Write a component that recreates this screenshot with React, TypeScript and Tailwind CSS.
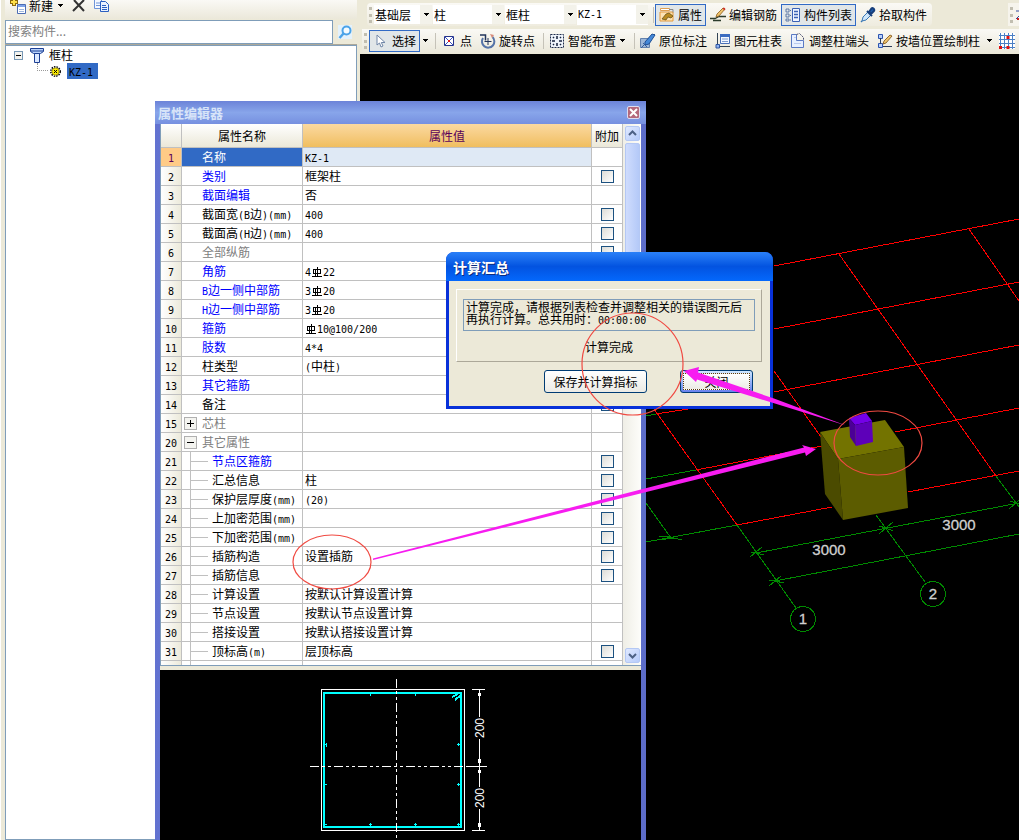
import React, { useState } from 'react';

const MONO = "font-['DejaVu_Sans_Mono','Noto_Sans_CJK_SC',monospace] text-[10px] leading-none";

const Rebar: React.FC = () => (
  <svg viewBox="0 0 10 10" className="inline-block w-[10px] h-[10px] mx-px align-[-1px]" fill="none" stroke="currentColor" shapeRendering="crispEdges">
    <path d="M1.500 2.500h7v4h-7zM3.500 2.500v7M5.500 0v10M0 9.500h10" />
  </svg>
);

// latin runs are half as wide as a hanzi, '#' stands for the rebar grade sign
const Mixed: React.FC<{ text: string }> = ({ text }) => (
  <>
    {text.split(/(#|[\x20-\x22\x24-\x7e]+)/).map((part, i) => {
      if (part === '#') return <Rebar key={i} />;
      if (/^[\x20-\x7e]+$/.test(part)) return <span key={i} className={MONO}>{part}</span>;
      return part;
    })}
  </>
);

interface PropertyRow {
  no: number;
  name: string;
  value?: string;
  color?: 'blue' | 'gray';
  check?: boolean;
  group?: '+' | '-';
  child?: boolean;
}

const rows: PropertyRow[] = [
  { no: 1, name: '名称', value: 'KZ-1' },
  { no: 2, name: '类别', value: '框架柱', color: 'blue', check: true },
  { no: 3, name: '截面编辑', value: '否', color: 'blue' },
  { no: 4, name: '截面宽(B边)(mm)', value: '400', check: true },
  { no: 5, name: '截面高(H边)(mm)', value: '400', check: true },
  { no: 6, name: '全部纵筋', color: 'gray', check: true },
  { no: 7, name: '角筋', value: '4#22', color: 'blue', check: true },
  { no: 8, name: 'B边一侧中部筋', value: '3#20', color: 'blue', check: true },
  { no: 9, name: 'H边一侧中部筋', value: '3#20', color: 'blue', check: true },
  { no: 10, name: '箍筋', value: '#10@100/200', color: 'blue', check: true },
  { no: 11, name: '肢数', value: '4*4', color: 'blue' },
  { no: 12, name: '柱类型', value: '(中柱)', check: true },
  { no: 13, name: '其它箍筋', color: 'blue' },
  { no: 14, name: '备注', check: true },
  { no: 15, name: '芯柱', color: 'gray', group: '+' },
  { no: 20, name: '其它属性', color: 'gray', group: '-' },
  { no: 21, name: '节点区箍筋', color: 'blue', check: true, child: true },
  { no: 22, name: '汇总信息', value: '柱', check: true, child: true },
  { no: 23, name: '保护层厚度(mm)', value: '(20)', check: true, child: true },
  { no: 24, name: '上加密范围(mm)', check: true, child: true },
  { no: 25, name: '下加密范围(mm)', check: true, child: true },
  { no: 26, name: '插筋构造', value: '设置插筋', check: true, child: true },
  { no: 27, name: '插筋信息', check: true, child: true },
  { no: 28, name: '计算设置', value: '按默认计算设置计算', child: true },
  { no: 29, name: '节点设置', value: '按默认节点设置计算', child: true },
  { no: 30, name: '搭接设置', value: '按默认搭接设置计算', child: true },
  { no: 31, name: '顶标高(m)', value: '层顶标高', check: true, child: true },
];

/* ---------- icons ---------- */

const Icon: React.FC<{ children: React.ReactNode }> = ({ children }) => (
  <svg viewBox="0 0 16 16" className="w-4 h-4 shrink-0" fill="none" aria-hidden="true">
    {children}
  </svg>
);

const PropertyIcon = () => (
  <Icon>
    <path d="M1.500 1.500h9v2h-9z" fill="#fff" stroke="#e0a050" />
    <path d="M1 5h13v9H1z" fill="#fde3b4" stroke="#e59a3c" />
    <path d="M3 12l4-5 3-1 4 3-2 2-3-1-2 3z" fill="#b98a20" stroke="#5f4a10" strokeWidth=".7" />
    <path d="M10 2.500h4v3" stroke="#888" />
  </Icon>
);

const EditBarIcon = () => (
  <Icon>
    <path d="M0 11.500h5l4-2h7M3 13.500h8" stroke="#2b3b2b" strokeWidth="1.300" />
    <path d="M6 10l1-3 6-6 2 1-6 7z" fill="#efc36b" stroke="#8a5a1c" strokeWidth=".8" />
    <path d="M12.500 1.500l1.500-1 1.500 1.500-1 1.500z" fill="#d03028" />
  </Icon>
);

const ListIcon = () => (
  <Icon>
    <path d="M1 2h3v3H1zM1 7h3v3H1zM1 12h3v2H1z" stroke="#5470a0" strokeWidth=".9" />
    <path d="M5 3.500h1M5 8.500h1M5 13h1" stroke="#5470a0" />
    <path d="M7.500 1.500h7v13h-7z" fill="#eef4ff" stroke="#3b62b4" />
    <path d="M9 4.500h4M9 7.500h4M9 10.500h4" stroke="#3b62b4" strokeWidth="1.500" />
  </Icon>
);

const DropperIcon = () => (
  <Icon>
    <path d="M2 14l1-4 5-5 3 3-5 5z" fill="#cfe6fa" stroke="#3977b5" />
    <path d="M7 4l5 5M9 5l2.500-3.500c1-1 3.500.500 2.500 2.500L11 7z" fill="#1f5fae" stroke="#173f7c" strokeWidth="2" />
    <path d="M1 15l1-1" stroke="#3977b5" strokeWidth="1.500" />
  </Icon>
);

const CursorIcon = () => (
  <Icon>
    <path d="M4 2v10l2.500-2 1.500 4 2-1-1.700-3.500H12z" fill="#fff" stroke="#7187a8" />
  </Icon>
);

const PointIcon = () => (
  <Icon>
    <path d="M3.500 3.500h9v9h-9z" fill="#fff" stroke="#26348c" />
    <path d="M4 4l8 8M12 4l-8 8" stroke="#3c50c0" />
    <path d="M7 7h2v2H7z" fill="#e01818" />
  </Icon>
);

const RotateIcon = () => (
  <Icon>
    <path d="M3 5a6.200 6.200 0 1 0 9.500-1" stroke="#5674a8" strokeWidth="2" />
    <path d="M0 2h5.500v5.500" stroke="#22345c" strokeWidth="1.500" />
    <path d="M8 5v7M4.500 8.500h7" stroke="#22345c" />
    <path d="M10 1l4 1-2 3z" fill="#d68a7a" />
  </Icon>
);

const SmartIcon = () => (
  <Icon>
    <path d="M1.500 1.500h13v13h-13z" fill="#eef3fb" stroke="#1e2c4c" strokeDasharray="2 1" />
    <path d="M8 3v3M8 10v3M3 8h3M10 8h3M4 4l1 1M12 4l-1 1M4 12l1-1M12 12l-1-1" stroke="#14203c" strokeWidth="1.500" />
  </Icon>
);

const OriginIcon = () => (
  <Icon>
    <path d="M.500 5.500h9v9h-9z" fill="#9db7d8" stroke="#6482ae" />
    <path d="M1 15L15 1M3 10l4 4" stroke="#335f9f" />
    <path d="M5 9l7-8 3 1-6 9-4 1z" fill="#4488d8" stroke="#1f4f94" />
  </Icon>
);

const TableIcon = () => (
  <Icon>
    <path d="M2.500 0v12" stroke="#345" />
    <path d="M5.500 1.500h9v9h-9z" fill="#f3f8ff" stroke="#4a70b8" />
    <path d="M5 1h10v3H5z" fill="#3c6cc0" />
    <path d="M7 6h6M7 8.500h6" stroke="#7d9bd0" />
    <path d="M1 11.500h3.500V15H1z" fill="#8fb2ee" stroke="#2c54a0" />
    <path d="M5 13.500h10" stroke="#345" />
  </Icon>
);

const AdjustIcon = () => (
  <Icon>
    <path d="M1.500 1.500h5v6h7v7h-12z" fill="#e8f0ff" stroke="#5a7ac4" />
    <path d="M6.500 1.500l3-1 4 4v3" stroke="#4a4f70" strokeDasharray="2 1" />
    <path d="M4 4.500h2M4 10.500h7" stroke="#b9caef" />
  </Icon>
);

const WallIcon = () => (
  <Icon>
    <path d="M1.500 1.500h4v4h-4zM1.500 10.500h4v4h-4z" fill="#b9d0fa" stroke="#2c54b0" />
    <path d="M3.500 5v6M6 13.500h9" stroke="#2b3b5b" />
    <path d="M6 11l1-3 6-6 2 1-6 7z" fill="#efc36b" stroke="#7a4c14" strokeWidth=".8" />
  </Icon>
);

const GridIcon = () => (
  <Icon>
    <path d="M0 0h16v16H0z" fill="#fff" />
    <path d="M1.500 0v16M5.500 0v16M9.500 0v16M13.500 0v16M0 2.500h16M0 6.500h16M0 10.500h16M0 14.500h16" stroke="#4a7fc4" />
    <path d="M7.500 3h3v3h-3zM0 13h3v3H0zM7.500 13h3v3h-3z" fill="#e01010" />
  </Icon>
);

/* ---------- toolbars ---------- */

const ArrowDown: React.FC = () => (
  <svg viewBox="0 0 7 4" className="w-[7px] h-1 shrink-0" aria-hidden="true" shapeRendering="crispEdges">
    <path d="M1 0h5L3.500 3z" fill="#000" stroke="#000" strokeWidth=".5" />
  </svg>
);

const Grip: React.FC = () => (
  <span className="w-[3px] h-4 mr-[2px] shrink-0 border-l-3 border-dotted border-[#c1beb0]" />
);

const Separator: React.FC = () => <span className="ml-1 mr-px w-px h-4 shrink-0 bg-[#c5c2b8]" />;

const ToolButton: React.FC<{ icon: React.ReactNode; label: string; active?: boolean; menu?: boolean }> = ({
  icon,
  label,
  active,
  menu,
}) => (
  <button
    type="button"
    className={`flex items-center shrink-0 gap-[3px] h-[22px] px-[3px] border whitespace-nowrap ${
      active ? 'border-[#316ac5] bg-[#e1e6e8]' : 'border-transparent'
    }`}
  >
    {icon}
    <span>{label}</span>
    {menu && <ArrowDown />}
  </button>
);

const Combo: React.FC<{ label: string; value: string; narrow?: boolean }> = ({ label, value, narrow }) => (
  <label className={`relative block shrink-0 h-[19px] bg-white ${narrow ? 'w-[58px]' : 'w-[71px]'}`}>
    <select
      aria-label={label}
      defaultValue={value}
      className={`appearance-none w-full h-full pl-px bg-white outline-none ${
        value === 'KZ-1' ? "font-['DejaVu_Sans_Mono',monospace] text-[10px]" : ''
      }`}
    >
      <option>{value}</option>
    </select>
    <span className="absolute right-0 inset-y-0 w-3 flex items-center justify-center bg-[#f3f2ea] pointer-events-none">
      <ArrowDown />
    </span>
  </label>
);

const Toolbars: React.FC = () => (
  <div className="h-[54px] shrink-0 overflow-hidden bg-[#ece9d8] pt-[3px]">
    <div className="flex justify-between h-[23px] pl-[7px]">
      <div className="flex items-center pl-[2px] pr-px bg-linear-to-b from-[#faf9f5] to-[#efecdf] rounded-sm">
        <Grip />
        <div className="flex gap-px mr-px">
          <Combo label="楼层" value="基础层" narrow />
          <Combo label="构件类型" value="柱" />
          <Combo label="构件" value="框柱" />
          <Combo label="名称" value="KZ-1" />
        </div>
        <Separator />
        <ToolButton icon={<PropertyIcon />} label="属性" active />
        <ToolButton icon={<EditBarIcon />} label="编辑钢筋" />
        <ToolButton icon={<ListIcon />} label="构件列表" active />
        <ToolButton icon={<DropperIcon />} label="拾取构件" />
      </div>
      <div className="flex items-center bg-[#f6f4ec] pl-[2px]">
        <Grip />
        <svg viewBox="0 0 4 16" className="w-1 h-4" fill="none">
          <path d="M1 4h3M1 12l3-3" stroke="#334a9c" />
          <path d="M2 12h2" stroke="#d02020" strokeWidth="2" />
        </svg>
      </div>
    </div>
    <div className="flex items-center h-6 mt-[3px] ml-[2px] pl-[2px] bg-linear-to-b from-[#faf9f5] to-[#ebe8da]">
      <Grip />
      <ToolButton icon={<CursorIcon />} label="选择" active />
      <button type="button" aria-label="选择方式" className="px-[2px] h-full"><ArrowDown /></button>
      <Separator />
      <ToolButton icon={<PointIcon />} label="点" />
      <ToolButton icon={<RotateIcon />} label="旋转点" />
      <Separator />
      <ToolButton icon={<SmartIcon />} label="智能布置" menu />
      <Separator />
      <ToolButton icon={<OriginIcon />} label="原位标注" />
      <ToolButton icon={<TableIcon />} label="图元柱表" />
      <ToolButton icon={<AdjustIcon />} label="调整柱端头" />
      <ToolButton icon={<WallIcon />} label="按墙位置绘制柱" />
      <button type="button" aria-label="绘制方式" className="px-[2px] h-full"><ArrowDown /></button>
      <button type="button" aria-label="轴网" className="px-1 shrink-0"><GridIcon /></button>
    </div>
  </div>
);

/* ---------- component list ---------- */

const ComponentTree: React.FC = () => {
  const [keyword, setKeyword] = useState('');

  return (
    <aside className="flex flex-col w-[360px] shrink-0 pl-[4px] pr-[3px] bg-[#ece9d8] border-l border-white">
      <div className="flex items-start h-[19px] shrink-0 overflow-hidden bg-linear-to-b from-[#faf9f5] to-[#ebe8da]">
        <button type="button" className="flex items-start h-4 pl-[5px]">
          <svg viewBox="0 0 16 14" className="w-4 h-[14px]" fill="none">
            <path d="M0 2h8M4 0v6" stroke="#8a6a10" strokeWidth="4" />
            <path d="M1 2h6M4 0v5" stroke="#ffe04a" strokeWidth="2" />
            <path d="M7.500 4.500h8v9h-8z" fill="#fff" stroke="#4c6db4" />
            <path d="M8 5h7v2H8z" fill="#7fa4e8" />
            <path d="M9 9.500h5M9 11.500h5" stroke="#9fb7de" />
          </svg>
          <span className="h-4 leading-3 ml-[3px]">新建</span>
          <span className="ml-1 mt-1 flex"><ArrowDown /></span>
        </button>
        <button type="button" aria-label="删除" className="ml-2">
          <svg viewBox="0 0 14 12" className="w-[14px] h-3" fill="none">
            <path d="M2 0l10 11M12 0L1 11" stroke="#333" strokeWidth="2" />
          </svg>
        </button>
        <button type="button" aria-label="复制" className="ml-2">
          <svg viewBox="0 0 16 13" className="w-4 h-[13px]" fill="none">
            <path d="M.500 0v8.500h7V0" fill="#f4f8ff" stroke="#6f94d8" />
            <path d="M2 3h4M2 5.500h4" stroke="#6f94d8" />
            <path d="M6.500 1.500h5l3 3v7h-8z" fill="#eaf2ff" stroke="#2b5fc0" />
            <path d="M8 5.500h4M8 7.500h5M8 9.500h5" stroke="#2b5fc0" />
          </svg>
        </button>
      </div>
      <form className="flex h-[26px] shrink-0 pt-px border-b border-[#aca899]" onSubmit={(e) => e.preventDefault()}>
        <input
          type="text"
          aria-label="搜索构件"
          placeholder="搜索构件..."
          value={keyword}
          onChange={(e) => setKeyword(e.target.value)}
          className="grow h-6 pl-[2px] pb-1 bg-white border border-[#7f9db9] placeholder:text-[#808080] outline-none"
        />
        <button type="submit" aria-label="搜索" className="w-6 flex items-center justify-center">
          <svg viewBox="0 0 14 14" className="w-[14px] h-[14px]" fill="none">
            <path d="M0 0h14v14H0z" fill="#e3f1fb" />
            <circle cx="8.500" cy="5.500" r="4" stroke="#4ba3e8" strokeWidth="2" fill="#f4fbff" />
            <path d="M5.500 8.500L1.500 13" stroke="#4ba3e8" strokeWidth="2.500" />
          </svg>
        </button>
      </form>
      <div className="grow bg-white border border-[#7f9db9] pt-px pl-2">
        <div className="flex items-center h-4">
          <svg viewBox="0 0 9 9" className="w-[9px] h-[9px]" fill="none" shapeRendering="crispEdges">
            <path d="M.500.500h8v8h-8z" fill="#f4f3ee" stroke="#7898b5" />
            <path d="M2 4.500h5" stroke="#000" />
          </svg>
          <svg viewBox="0 0 14 15" className="w-[14px] h-[15px] ml-[7px]" fill="none">
            <path d="M.500.500h13v3l-3 2h-7l-3-2z" fill="#b9d3fb" stroke="#1c3f94" />
            <path d="M4.500 5.500h5v9h-5z" fill="#dbe8ff" stroke="#1c3f94" />
            <path d="M1 3h12" stroke="#1c3f94" />
          </svg>
          <span className="ml-[5px]">框柱</span>
        </div>
        <div className="flex items-center h-4 pl-[23px]">
          <span className="w-[11px] h-2 -mt-2 border-l border-b border-dotted border-[#999]" />
          <svg viewBox="0 0 11 11" className="w-[11px] h-[11px] ml-[2px]" fill="none">
            <circle cx="5.500" cy="5.500" r="4.700" stroke="#000" strokeWidth="1.500" strokeDasharray="1.500 1" />
            <circle cx="5.500" cy="5.500" r="3.500" fill="#ffee00" stroke="#a89a00" />
            <path d="M4 4l3 3M7 4L4 7" stroke="#000" />
          </svg>
          <button type="button" className="ml-[6px] h-4 w-[31px] text-left pl-[2px] leading-4 bg-[#316ac5]">
            <Mixed text="KZ-1" />
          </button>
        </div>
      </div>
    </aside>
  );
};

/* ---------- 3D view ---------- */

const ModelView: React.FC = () => (
  <div className="grow min-h-0 overflow-hidden bg-black">
    <svg viewBox="360 54 659 786" className="w-full min-w-[659px] h-[786px]" preserveAspectRatio="xMinYMin slice" fill="none">
      <g stroke="#f00" shapeRendering="crispEdges">
        <path d="M774 266L1019 219M774 329L1019 282M774 392L1019 345M656 414L688 409M895 432L1019 408M696 470L822 446M908 492L1019 471M737 525L832 507" />
        <path d="M839 254L996 476M774 371L821 437M654 409L737 525M969 229L1019 301" />
      </g>
      <g stroke="#008a00" shapeRendering="crispEdges">
        <path d="M646 416L656 414M646 479L696 470M646 542L737 525M996 476L1019 507M876 515L925 582M737 525L796 608" />
        <path d="M756 553L1019 503M775 581L1019 534M646 503L671 538M659 536h6l17 4M661 540l10-2h6" />
        <path d="M750 557l12-10M756 553l8 2M756 553l-5-1M769 586l12-10M775 581l9 2M775 581l-6-1M879 534l14-12M886 528l7 3M886 528l-7-2M1009 509l10-9M1016 503l-6-2" />
        <circle cx="803" cy="619" r="12.500" />
        <circle cx="933" cy="594" r="12.500" />
      </g>
      <path d="M820 432L885 420L904 447L838 459z" fill="#737300" />
      <path d="M820 432L838 459L843 520L825 494z" fill="#4b4b00" />
      <path d="M838 459L904 447L908 508L843 520z" fill="#5c5c00" />
      <path d="M849 418L866 413L872 421L855 425z" fill="#7400e8" />
      <path d="M849 418L855 425L856 446L850 437z" fill="#4b0096" />
      <path d="M855 425L872 421L873 442L856 446z" fill="#5d00b9" />
      <g fill="#d0d0d0" className="font-['Liberation_Sans',sans-serif] text-[15px]" stroke="#d0d0d0" strokeWidth=".300" textAnchor="middle">
        <text x="829" y="555">3000</text>
        <text x="959" y="530">3000</text>
        <text x="803" y="624">1</text>
        <text x="933" y="599">2</text>
      </g>
    </svg>
  </div>
);

/* ---------- property editor ---------- */

const nameColor = (row: PropertyRow) => {
  if (row.no === 1) return 'bg-[#316ac5] text-white';
  if (row.color === 'blue') return 'text-[#0000ff]';
  if (row.color === 'gray') return 'text-[#808080]';
  return '';
};

const PropertyTable: React.FC = () => (
  <table className="grow self-start table-fixed border-separate border-spacing-0">
    <colgroup>
      <col className="w-[21px]" />
      <col className="w-[121px]" />
      <col />
      <col className="w-[31px]" />
    </colgroup>
    <thead>
      <tr className="h-6">
        <th className="bg-linear-to-b from-white to-[#ebe8d8] border-r border-b border-[#c0c0c0]" />
        <th className="bg-linear-to-b from-white to-[#ebe8d8] border-r border-b border-[#c0c0c0] font-normal">属性名称</th>
        <th className="bg-linear-to-b from-[#fbd9a0] to-[#f0be5e] border-r border-b border-[#c0c0c0] font-normal text-[#5a005a]">属性值</th>
        <th className="bg-linear-to-b from-white to-[#ebe8d8] border-r border-b border-[#c0c0c0] font-normal whitespace-nowrap">附加</th>
      </tr>
    </thead>
    <tbody>
      {rows.map((row) => (
        <tr key={row.no} className="h-[19px] leading-[18px]">
          <td
            className={`text-center border-r border-b border-[#c0c0c0] ${
              row.no === 1 ? 'bg-[#ffcb86] text-[#5a005a]' : 'bg-linear-to-r from-white to-[#eceadb]'
            }`}
          >
            <div className="h-[18px]"><Mixed text={String(row.no)} /></div>
          </td>
          <td className={`border-r border-b border-[#c0c0c0] whitespace-nowrap ${nameColor(row)}`}>
            <div className="flex items-center h-[18px]">
              {row.group && (
                <button type="button" aria-label={row.name} className="ml-[2px] mr-[5px] w-[13px] h-[13px] border border-[#b0b0b0] bg-[#f4f4f0] text-black">
                  <svg viewBox="0 0 11 11" className="w-[11px] h-[11px]" stroke="#000" shapeRendering="crispEdges">
                    <path d={row.group === '+' ? 'M2 5.500h7M5.500 2v7' : 'M2 5.500h7'} />
                  </svg>
                </button>
              )}
              {row.child && (
                <span className="ml-2 mr-[4px] w-[18px] h-[18px] flex items-center border-l border-[#c0c0c0]">
                  <span className="w-full h-px bg-[#c0c0c0]" />
                </span>
              )}
              <span className={row.group || row.child ? '' : 'pl-5'}><Mixed text={row.name} /></span>
            </div>
          </td>
          <td className={`pl-[2px] border-r border-b border-[#c0c0c0] ${row.no === 1 ? 'bg-[#dfe9f5]' : ''}`}>
            <div className="h-[18px]"><Mixed text={row.value ?? ''} /></div>
          </td>
          <td className="border-r border-b border-[#c0c0c0]">
            {row.check && (
              <input
                type="checkbox"
                aria-label={`附加 ${row.name}`}
                className="appearance-none block mx-auto w-[13px] h-[13px] border border-[#1c5180] bg-linear-to-br from-[#dcdcd7] to-white"
              />
            )}
          </td>
        </tr>
      ))}
      <tr className="h-1">
        <td className="border-r border-[#c0c0c0] bg-linear-to-r from-white to-[#eceadb]" />
        <td className="border-r border-[#c0c0c0]"><div className="ml-2 h-1 border-l border-[#c0c0c0]" /></td>
        <td className="border-r border-[#c0c0c0]" />
        <td className="border-r border-[#c0c0c0]" />
      </tr>
    </tbody>
  </table>
);

const ScrollButton: React.FC<{ label: string; path: string }> = ({ label, path }) => (
  <button type="button" aria-label={label} className="w-[15px] h-[15px] rounded-xs border border-[#b4c8f4] bg-linear-to-br from-[#e0e9ff] to-[#b6cbfa]">
    <svg viewBox="0 0 13 13" className="w-[13px] h-[13px]" fill="none" stroke="#4d6185" strokeWidth="2">
      <path d={path} />
    </svg>
  </button>
);

const SectionPreview: React.FC = () => (
  <div className="grow min-h-0 overflow-hidden bg-black">
    <svg viewBox="160 670 481 170" className="w-[481px] h-[170px]" fill="none" stroke="#fff" shapeRendering="crispEdges">
      <path d="M321.500 689.500h143v141h-143z" />
      <path d="M324 693h137v134h-137z" stroke="#0ff" strokeWidth="2" />
      <path d="M452 697l6-3M455 700l6-5" stroke="#0ff" strokeWidth="2" />
      <path d="M370.500 693v3M415.500 693v3M326 742.500v4M324 744.500h3M324 784.500h3M457 744.500h3M458.500 743v3M457 784.500h3M458.500 783v3M369 824.500h3M370.500 823v3M414 824.500h3M415.500 823v3M457 824.500h3M458.500 823v3M325 824.500h2" stroke="#0ff" />
      <path d="M396.500 679v160M310 766.500h159" strokeDasharray="9 3 3 3 3 3" />
      <path d="M469 766.500h18M472 689.500h13M472 830.500h13M479.500 690v27M479.500 739v48M479.500 809v22" />
      <path d="M478 693h3v3h-3zM478 759h3v4h-3zM478 770h3v3h-3zM478 823h3v4h-3z" fill="#fff" stroke="none" />
      <g fill="#fff" stroke="none" textAnchor="middle" className="font-['Liberation_Sans',sans-serif] text-[12px]">
        <text transform="translate(484 728) rotate(-90)">200</text>
        <text transform="translate(484 798) rotate(-90)">200</text>
      </g>
    </svg>
  </div>
);

const PropertyEditor: React.FC = () => (
  <section className="absolute left-[155px] top-[101px] bottom-0 w-[491px] flex flex-col px-[5px] bg-linear-to-r from-[#6272d0] via-[#7f94e4] to-[#5c6cc8]">
    <header className="flex items-center justify-between h-[23px] shrink-0 -mx-[5px] pl-[3px] pr-[6px] bg-linear-to-b from-[#6c83d8] via-[#88a5ea] to-[#7690e0]">
      <h2 className="text-[13px] font-bold text-[#d8e4f8]">属性编辑器</h2>
      <button type="button" aria-label="关闭属性编辑器" className="flex items-center justify-center w-[13px] h-[13px] rounded-xs border border-[#dcdcf0] bg-[#b4687c]">
        <svg viewBox="0 0 9 9" className="w-[9px] h-[9px]" stroke="#fff" strokeWidth="2">
          <path d="M1 1l7 7M8 1L1 8" />
        </svg>
      </button>
    </header>
    <div className="flex h-[541px] shrink-0 overflow-hidden bg-white border-l border-[#7f9db9]">
      <PropertyTable />
      <div className="flex flex-col w-[18px] shrink-0 items-center py-[2px] bg-linear-to-r from-[#efeee6] to-[#fdfdfa]">
        <ScrollButton label="向上滚动" path="M3 8l3.500-3.500L10 8" />
        <div className="w-[15px] h-[250px] mt-[2px] rounded-xs border border-[#b4c8f4] bg-linear-to-r from-[#cfdcfd] to-[#b4c9f8]" />
        <div className="grow" />
        <ScrollButton label="向下滚动" path="M3 5l3.500 3.500L10 5" />
      </div>
    </div>
    <div className="h-[5px] shrink-0 bg-[#ece9d8] border-t border-[#7f9db9]" />
    <SectionPreview />
  </section>
);

/* ---------- result dialog ---------- */

const ResultDialog: React.FC = () => (
  <div role="dialog" aria-labelledby="result-title" className="absolute left-[446px] top-[252px] w-[327px] rounded-t-lg bg-[#0831d9] px-[3px] pb-[3px]">
    <h2
      id="result-title"
      className="flex items-center h-[29px] -mx-[3px] pl-[7px] rounded-t-lg text-[14px] font-bold text-white [text-shadow:1px_1px_#0a2a80] bg-linear-to-b from-[#2a80f8] via-[#0353e0] to-[#0468fc]"
    >
      计算汇总
    </h2>
    <div className="bg-[#ece9d8] pt-2 pb-[13px] px-[8px]">
      <div className="h-[73px] -ml-px px-[6px] pt-[9px] border border-t-white border-l-white border-r-[#aca899] border-b-[#aca899]">
        <p className="h-8 px-[2px] pt-px leading-3 border border-[#7f9db9]">
          <Mixed text="计算完成，请根据列表检查并调整相关的错误图元后再执行计算。总共用时：00:00:00" />
        </p>
        <p className="mt-2 text-center leading-4">计算完成</p>
      </div>
      <div className="flex justify-end gap-[33px] mt-2 pr-[9px]">
        <button type="button" className="w-[103px] h-[23px] rounded-[3px] border border-[#003c74] bg-linear-to-b from-white to-[#ecebe5]">
          保存并计算指标
        </button>
        <button type="button" className="w-[73px] h-[23px] rounded-[3px] border border-[#003c74] bg-linear-to-b from-[#cee7ff] to-[#6982ee] p-[2px]">
          <span className="flex items-center justify-center h-full border border-dotted border-[#5a3a10] bg-linear-to-b from-white to-[#ecebe5]">关闭</span>
        </button>
      </div>
    </div>
  </div>
);

const Annotations: React.FC = () => (
  <svg viewBox="0 0 1019 840" className="absolute left-0 top-0 w-[1019px] h-[840px] pointer-events-none" fill="none">
    <g stroke="#f04a42" strokeWidth="1.200">
      <ellipse cx="332" cy="562" rx="39" ry="27" />
      <ellipse cx="632.500" cy="364" rx="50.500" ry="51" />
      <ellipse cx="878" cy="443" rx="44" ry="32" />
    </g>
    <g fill="#f71cf0">
      <path d="M373 558.500L804 447.500L802 445L816 449L806 456L805 452.500L373 560z" />
      <path d="M846 425.500L697 379.500L696 382L684 371L699 367L698 372.500L774 398.500z" />
    </g>
  </svg>
);

const App: React.FC = () => (
  <div className="relative flex h-screen min-h-[840px] overflow-hidden text-[12px] leading-4 text-black font-['Noto_Sans_CJK_SC',sans-serif]">
    <ComponentTree />
    <main className="flex flex-col grow min-w-0">
      <Toolbars />
      <ModelView />
    </main>
    <PropertyEditor />
    <ResultDialog />
    <Annotations />
  </div>
);

export default App;
